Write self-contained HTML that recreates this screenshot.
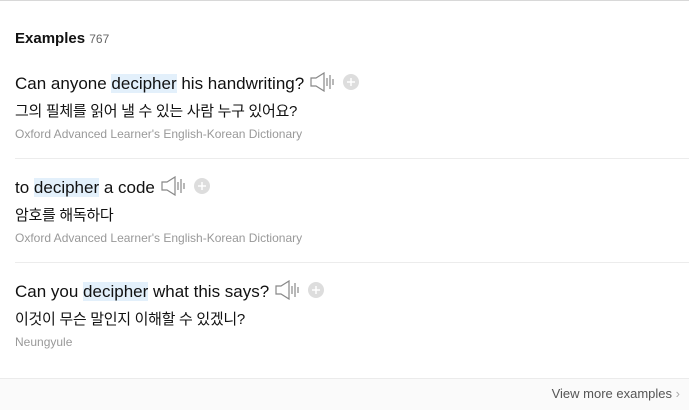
<!DOCTYPE html>
<html><head><meta charset="utf-8"><style>
body{margin:0;width:689px;height:409px;background:#fff;position:relative;overflow:hidden;font-family:"Liberation Sans","Noto Sans CJK KR",sans-serif}
.top{position:absolute;left:0;top:0;width:689px;height:1px;background:#d8d8d8}
.h{position:absolute;left:15px;top:30px;font-size:15px;font-weight:bold;color:#111}
.h span{font-weight:normal;font-size:12px;color:#666}
.en{position:absolute;left:15px;font-size:17px;color:#111;white-space:nowrap;line-height:20px}
.en b{font-weight:normal;background:#e3f0fb}
.ko{position:absolute;left:15px;font-size:15px;color:#111;white-space:nowrap;letter-spacing:-0.3px}
.src{position:absolute;left:15px;font-size:12px;color:#999;white-space:nowrap}
.sep{position:absolute;left:15px;width:674px;height:1px;background:#ececec}
.ic{display:inline-block;vertical-align:-3px;margin-left:6px}
.foot{position:absolute;left:0;top:378px;width:689px;height:31px;background:#fafafa;border-top:1px solid #ebebeb}
.more{position:absolute;right:9px;top:386px;font-size:13px;color:#555}
</style></head><body>
<div class="top"></div>
<div class="h">Examples <span>767</span></div>

<div class="en" style="top:72px">Can anyone <b>decipher</b> his handwriting?<svg class="ic" width="50" height="20" viewBox="0 0 50 20"><path d="M1 6h5l8-5v18l-8-5H1z" fill="none" stroke="#888" stroke-width="1.2"/><path d="M17 6v8M20 3v14M23 7v6" stroke="#888" stroke-width="1.2"/><circle cx="41" cy="10" r="8" fill="#ddd"/><path d="M41 6v8M37 10h8" stroke="#fff" stroke-width="1.5"/></svg></div>
<div class="ko" style="top:100px">그의 필체를 읽어 낼 수 있는 사람 누구 있어요?</div>
<div class="src" style="top:127px">Oxford Advanced Learner's English-Korean Dictionary</div>
<div class="sep" style="top:158px"></div>

<div class="en" style="top:176px">to <b>decipher</b> a code<svg class="ic" width="50" height="20" viewBox="0 0 50 20"><path d="M1 6h5l8-5v18l-8-5H1z" fill="none" stroke="#888" stroke-width="1.2"/><path d="M17 6v8M20 3v14M23 7v6" stroke="#888" stroke-width="1.2"/><circle cx="41" cy="10" r="8" fill="#ddd"/><path d="M41 6v8M37 10h8" stroke="#fff" stroke-width="1.5"/></svg></div>
<div class="ko" style="top:204px">암호를 해독하다</div>
<div class="src" style="top:231px">Oxford Advanced Learner's English-Korean Dictionary</div>
<div class="sep" style="top:262px"></div>

<div class="en" style="top:280px">Can you <b>decipher</b> what this says?<svg class="ic" width="50" height="20" viewBox="0 0 50 20"><path d="M1 6h5l8-5v18l-8-5H1z" fill="none" stroke="#888" stroke-width="1.2"/><path d="M17 6v8M20 3v14M23 7v6" stroke="#888" stroke-width="1.2"/><circle cx="41" cy="10" r="8" fill="#ddd"/><path d="M41 6v8M37 10h8" stroke="#fff" stroke-width="1.5"/></svg></div>
<div class="ko" style="top:308px">이것이 무슨 말인지 이해할 수 있겠니?</div>
<div class="src" style="top:335px">Neungyule</div>

<div class="foot"></div>
<div class="more">View more examples <span style="color:#aaa">›</span></div>
</body></html>
